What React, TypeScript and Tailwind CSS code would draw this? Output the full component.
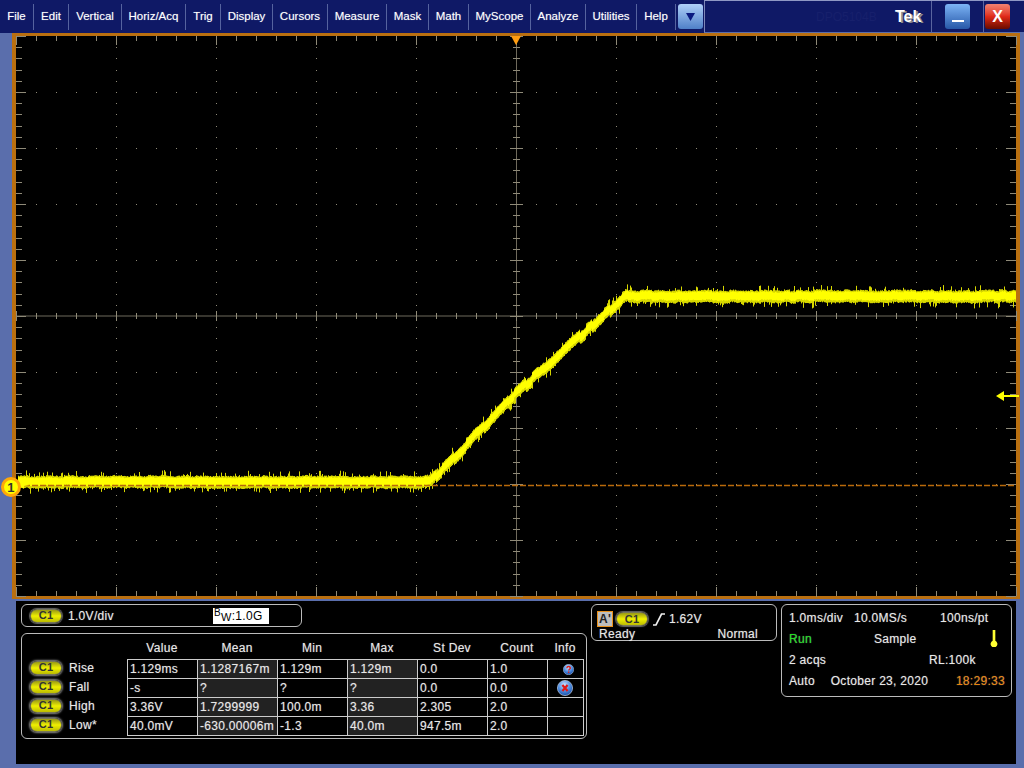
// Oscilloscope screen: menu bar, waveform graticule, readout panels.
const menus: [string, number][] = [
  ["File", 34],
  ["Edit", 35],
  ["Vertical", 53],
  ["Horiz/Acq", 64],
  ["Trig", 35],
  ["Display", 52],
  ["Cursors", 55],
  ["Measure", 59],
  ["Mask", 42],
  ["Math", 40],
  ["MyScope", 62],
  ["Analyze", 55],
  ["Utilities", 51],
  ["Help", 39],
];

const rows = [
  ["Rise", "1.129ms", "1.1287167m", "1.129m", "1.129m", "0.0", "1.0"],
  ["Fall", "-s", "?", "?", "?", "0.0", "0.0"],
  ["High", "3.36V", "1.7299999", "100.0m", "3.36", "2.305", "2.0"],
  ["Low*", "40.0mV", "-630.00006m", "-1.3", "40.0m", "947.5m", "2.0"],
];

const heads: [string, number][] = [
  ["Value", 70],
  ["Mean", 80],
  ["Min", 70],
  ["Max", 70],
  ["St Dev", 70],
  ["Count", 60],
  ["Info", 36],
];

// small deterministic random so the trace noise stays the same every run
function makeRandom(seed: number) {
  let s = seed;
  return () => {
    s = (s * 16807) % 2147483647;
    return s / 2147483647;
  };
}

function traceCenter(x: number) {
  // plot coordinates: left edge 16, top edge 36 in the page
  if (x < 414) return 446;
  if (x < 500) return 446 - ((x - 414) * 89) / 86;
  if (x < 610) return 357 - ((x - 500) * 97) / 110;
  return 260.5;
}

function tracePaths() {
  const r = makeRandom(4711);
  let outer = "";
  let inner = "";
  let wander = 0;
  for (let x = 2; x < 1000; x++) {
    const c = traceCenter(x);
    const onRamp = x >= 414 && x < 610;
    if (x % 6 === 0) wander = (r() - 0.5) * (onRamp ? 4 : 1.5);
    const spikeTop = r() > 0.86 ? 2 + r() * 4 : r() * 1.2;
    const spikeBottom = r() > 0.86 ? 2 + r() * 4 : r() * 1.2;
    const top = c + wander - 5.5 - spikeTop;
    const bottom = c + wander + 5.5 + spikeBottom;
    outer += `M${x + 0.5} ${top.toFixed(1)}V${bottom.toFixed(1)}`;
    inner += `M${x + 0.5} ${(c + wander - 4 - r()).toFixed(1)}V${(c + wander + 3 + r()).toFixed(1)}`;
  }
  return { outer, inner };
}

function gridPaths() {
  let ticks = "";
  let dots = "";
  const lines = "M0 280H1000M500.5 0V560";
  for (let i = 0; i <= 50; i++) {
    const x = i * 20 + 0.5;
    const major = i % 5 === 0;
    const len = major ? 9 : 5;
    ticks += `M${x} 0v${len}M${x} 560v${-len}`;
    ticks += `M${x} ${major ? 275 : 277}v${major ? 10 : 6}`;
  }
  for (let i = 0; i <= 50; i++) {
    const y = Math.round(i * 11.2) + 0.5;
    const major = i % 5 === 0;
    const len = major ? 10 : 6;
    ticks += `M0 ${y}h${len}M1000 ${y}h${-len}`;
    ticks += `M${major ? 494 : 497} ${y}h${major ? 13 : 7}`;
    for (let d = 1; d < 10; d++) {
      if (d !== 5) dots += `M${d * 100} ${y}h1`;
    }
  }
  for (let j = 1; j < 10; j++) {
    if (j === 5) continue;
    for (let i = 1; i < 50; i++) {
      if (i % 5 !== 0) dots += `M${i * 20} ${j * 56 + 0.5}h1`;
    }
  }
  return { ticks, dots, lines };
}

function Chip({ halo = false }: { halo?: boolean }) {
  return (
    <span
      className={`flex h-[14px] w-[32px] shrink-0 items-center justify-center rounded-full border border-[#77775a] bg-gradient-to-b from-[#9a9a10] via-[#f0f000] to-[#bcbc00] text-[11px] leading-none font-bold text-[#333] [text-shadow:none] ${
        halo ? "shadow-[0_0_2px_1px_#888]" : "shadow-[0_0_1px_1px_#666]"
      }`}
    >
      C1
    </span>
  );
}

function Scope() {
  const g = gridPaths();
  const t = tracePaths();
  return (
    <svg width="1000" height="560" viewBox="0 0 1000 560" className="block overflow-visible">
      <path d={g.lines} stroke="#6f6a5c" strokeWidth="1" fill="none" />
      <path d={g.ticks} stroke="#8f8a78" strokeWidth="1" fill="none" />
      <path d={g.dots} stroke="#8f8a78" strokeWidth="1" fill="none" />
      <path d={t.outer} stroke="#d6d600" strokeWidth="1" fill="none" />
      <path d={t.inner} stroke="#ffff00" strokeWidth="1" fill="none" />
      <path d="M0 449.5H1000" stroke="#b8690a" strokeWidth="1.5" strokeDasharray="6 2" fill="none" />
      <path d="M495 0h10l-5 9z" fill="#ff9d12" />
      <path d="M980 360l8 -5v4h15v2h-15v4z" fill="#ffff00" />
      <path d="M3 447h5l6 2 -6 1v3l-4 -3h-1z" fill="#ffff00" />
    </svg>
  );
}

function InfoIcon({ x }: { x?: boolean }) {
  return (
    <svg width={x ? 16 : 11} height={x ? 16 : 11} viewBox="0 0 16 16" className="block">
      <defs>
        <radialGradient id={x ? "ix" : "iq"} cx="45%" cy="30%" r="70%">
          <stop offset="0%" stopColor="#cfe4ff" />
          <stop offset="55%" stopColor="#4f90e4" />
          <stop offset="100%" stopColor="#1c4fa8" />
        </radialGradient>
      </defs>
      <circle cx="8" cy="8" r="7.6" fill={`url(#${x ? "ix" : "iq"})`} stroke="#dbe8fa" strokeWidth="0.6" />
      {x ? (
        <path d="M5.4 5l5.2 6M10.6 5l-5.2 6" stroke="#e01818" strokeWidth="2.2" fill="none" />
      ) : (
        <path d="M5.6 6c0-3.2 5-3.2 5 0 0 1.6-2.4 1.8-2.4 3.6M8.2 11v2" stroke="#d82020" strokeWidth="2" fill="none" />
      )}
    </svg>
  );
}

export default function App() {
  return (
    <div
      className="flex h-[768px] w-[1024px] flex-col overflow-hidden bg-[#5a6eac] text-[12px] leading-none tracking-[0.3px] text-[#e8e8e8] [text-shadow:0_0_1px_rgba(255,255,255,0.45)]"
      style={{ fontFamily: '"Liberation Sans", Arial, sans-serif' }}
    >
      {/* Menu bar */}
      <div className="flex h-[33px] shrink-0 items-center bg-[#0f1966] text-[11.5px] tracking-normal text-white">
        {menus.map(([name, w]) => (
          <div key={name} style={{ width: w }} className="flex h-[26px] shrink-0 items-center justify-center border-r border-[#56639f]">
            {name}
          </div>
        ))}
        <div className="ml-[2px] flex h-[25px] w-[25px] shrink-0 items-center justify-center rounded-[3px] bg-gradient-to-b from-[#b0d0f8] to-[#4f80c8]">
          <svg width="9" height="8" viewBox="0 0 9 8">
            <path d="M0 0h9L4.5 8z" fill="#0b1a80" />
          </svg>
        </div>
        <div className="ml-px flex h-[33px] flex-1 items-center border border-r-0 border-t-[#8f98c4] border-b-[#5a6eac] border-l-[#7d87b8]">
          <span className="ml-[111px] w-[79px] text-[12px] text-[#17206c] [text-shadow:none]">DPO5104B</span>
          <span className="w-[36px] text-[16px] font-bold text-white [text-shadow:2px_1px_0_#8a8a8a]">Tek</span>
          <div className="h-[31px] w-px bg-[#5a659f]" />
          <button className="ml-[13px] flex h-[25px] w-[25px] items-end justify-center rounded-[3px] bg-gradient-to-b from-[#7db4f5] to-[#2858a8] pb-[7px]">
            <span className="h-[2px] w-[12px] bg-white" />
          </button>
          <div className="ml-[13px] h-[31px] w-px bg-[#5a659f]" />
          <button className="ml-[1px] flex h-[25px] w-[25px] items-center justify-center rounded-[3px] bg-gradient-to-b from-[#f08070] via-[#e02a18] to-[#6a0c00] text-[16px] font-bold text-white">
            X
          </button>
        </div>
      </div>

      {/* Graticule */}
      <div className="relative mx-[12px] w-[1008px] shrink-0 border-x-[4px] border-y-[3px] border-[#b96f10] bg-black">
        <Scope />
        <div className="absolute top-[441px] left-[-15px] flex h-[20px] w-[20px] items-center justify-center rounded-full border-[3px] border-[#ffa808] bg-[#ffff00] text-[13px] font-bold text-[#333] [text-shadow:none]">
          1
        </div>
      </div>

      {/* Readouts */}
      <div className="mx-[16px] mt-[2px] flex h-[163px] w-[1000px] shrink-0 gap-[4px] bg-black pt-[3px] pl-[5px]">
        <div className="flex w-[566px] shrink-0 flex-col gap-[6px]">
          <div className="flex h-[23px] w-[281px] items-center rounded-[6px] border border-[#bbb] pl-[8px]">
            <Chip />
            <span className="ml-[6px] w-[145px] shrink-0">1.0V/div</span>
            <span className="flex h-[16px] w-[56px] shrink-0 items-center bg-white pl-[1px] text-black [text-shadow:none]">
              <span className="relative top-[-3px] text-[10px]">B</span>
              <span className="relative top-[2px] text-[11px]">W</span>
              :1.0G
            </span>
          </div>
          <div className="flex h-[106px] rounded-[6px] border border-[#bbb] pt-[3px]">
            <div className="w-[105px] shrink-0 pt-[21px] pl-[8px]">
              {rows.map((r) => (
                <div key={r[0]} className="flex h-[19px] items-center gap-[7px]">
                  <Chip halo />
                  <span>{r[0]}</span>
                </div>
              ))}
            </div>
            <div className="w-[457px] shrink-0">
              <div className="flex h-[22px] items-center">
                {heads.map(([h, w]) => (
                  <div key={h} style={{ width: w }} className="text-center">
                    {h}
                  </div>
                ))}
              </div>
              <table className="w-[457px] table-fixed border-collapse border border-[#ccc]">
                <tbody>
                  {rows.map((r, i) => (
                    <tr key={r[0]} className="h-[19px]">
                      <td className="w-[70px] border border-[#ccc] p-0 pb-px pl-[2px]">{r[1]}</td>
                      <td className="w-[80px] border border-[#ccc] bg-[#222] p-0 pb-px pl-[2px]">{r[2]}</td>
                      <td className="w-[70px] border border-[#ccc] p-0 pb-px pl-[2px]">{r[3]}</td>
                      <td className="w-[70px] border border-[#ccc] bg-[#222] p-0 pb-px pl-[2px]">{r[4]}</td>
                      <td className="w-[70px] border border-[#ccc] p-0 pb-px pl-[2px]">{r[5]}</td>
                      <td className="w-[60px] border border-[#ccc] p-0 pb-px pl-[2px]">{r[6]}</td>
                      <td className="border border-[#ccc] p-0">
                        {i === 0 && (
                          <div className="flex justify-end pr-[9px]">
                            <InfoIcon />
                          </div>
                        )}
                        {i === 1 && (
                          <div className="flex justify-end pr-[10px]">
                            <InfoIcon x />
                          </div>
                        )}
                      </td>
                    </tr>
                  ))}
                </tbody>
              </table>
            </div>
          </div>
        </div>

        {/* Trigger readout */}
        <div className="flex h-[37px] w-[186px] shrink-0 flex-col gap-[1px] rounded-[6px] border border-[#bbb] px-[5px] pt-[6px]">
          <div className="flex h-[16px] items-center">
            <span className="flex h-[16px] w-[16px] items-center justify-center border border-[#e8901a] bg-[#bdbdbd] text-[12px] font-bold text-[#222] [text-shadow:none]">A'</span>
            <span className="ml-[3px]">
              <Chip />
            </span>
            <svg width="14" height="14" viewBox="0 0 14 14" className="ml-[4px]">
              <path d="M1 13h3L9.5 2H13" stroke="#eee" strokeWidth="1.7" fill="none" />
            </svg>
            <span className="ml-[3px]">1.62V</span>
          </div>
          <div className="flex h-[12px] items-center justify-between pr-[13px] pl-[2px]">
            <span>Ready</span>
            <span>Normal</span>
          </div>
        </div>

        {/* Horizontal readout */}
        <div className="flex h-[93px] w-[231px] shrink-0 flex-col rounded-[6px] border border-[#bbb] pt-[2px] pr-[6px] pl-[7px]">
          <div className="flex h-[21px] items-center">
            <span className="w-[65px]">1.0ms/div</span>
            <span className="w-[86px]">10.0MS/s</span>
            <span>100ns/pt</span>
          </div>
          <div className="flex h-[21px] items-center">
            <span className="w-[85px] text-[#22e022]">Run</span>
            <span className="w-[116px]">Sample</span>
            <svg width="8" height="17" viewBox="0 0 8 18">
              <path d="M2.6 0h2.8v11.5a3.6 3.6 0 1 1-2.8 0z" fill="#ffff33" />
            </svg>
          </div>
          <div className="flex h-[21px] items-center">
            <span className="w-[140px]">2 acqs</span>
            <span>RL:100k</span>
          </div>
          <div className="flex h-[21px] items-center">
            <span className="w-[42px]">Auto</span>
            <span className="w-[126px]">October 23, 2020</span>
            <span className="text-[#e8860c]">18:29:33</span>
          </div>
        </div>
      </div>
    </div>
  );
}
